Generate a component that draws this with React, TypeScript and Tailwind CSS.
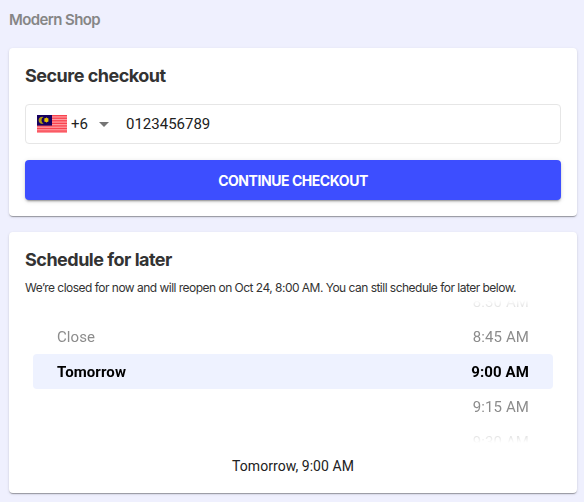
import React from "react";

const slots = [
    { day: "", time: "8:30 AM" },
    { day: "Close", time: "8:45 AM" },
    { day: "Tomorrow", time: "9:00 AM", selected: true },
    { day: "", time: "9:15 AM" },
    { day: "", time: "9:30 AM" },
];

const cardClass =
    "rounded-[4px] bg-white px-4 shadow-[0_2px_1px_-1px_rgba(0,0,0,0.2),0_1px_1px_0_rgba(0,0,0,0.14),0_1px_3px_0_rgba(0,0,0,0.12)]";

function MalaysiaFlag() {
    return (
        <svg width="30" height="18" viewBox="0 0 30 18" aria-hidden="true">
            <rect width="30" height="18" fill="#ff9ba1" />
            {[0, 1, 2, 3, 4, 5, 6].map((i) => (
                <rect key={i} y={i * 2.571} width="30" height="1.3" fill="#f8434e" />
            ))}
            <rect width="15" height="10.6" fill="#16005f" />
            <path d="M6.6 2.1A3.5 3.5 0 1 0 6.6 8.4A3.4 3.4 0 0 1 6.6 2.1Z" fill="#b39a10" />
            <circle cx="9.4" cy="5" r="1.9" fill="#e8c400" />
            <path
                d="M9.4 2.1l.6 1.5 1.5-.7-.6 1.5 1.5.6-1.5.6.6 1.5-1.5-.7-.6 1.5-.6-1.5-1.5.7.6-1.5-1.5-.6 1.5-.6-.6-1.5 1.5.7z"
                fill="#e8c400"
            />
        </svg>
    );
}

function App() {
    return (
        <div className="h-[502px] w-[584px] overflow-hidden bg-[#eff0fe] pr-[7px] pl-[9px] font-['Inter',sans-serif] text-[#333]">
            <header className="flex h-12 items-start pt-[9px]">
                <span className="text-[15px] leading-[22px] font-semibold tracking-[-0.6px] text-[#868686]">
                    Modern Shop
                </span>
            </header>

            {/* Checkout */}
            <section className={`${cardClass} h-[168px] pt-4`}>
                <h2 className="text-[18px] leading-6 font-bold tracking-[-0.5px]">
                    Secure checkout
                </h2>
                <div className="mt-4 flex h-10 items-center rounded-[4px] border border-[#e6e6e6] pl-[11px] font-['Roboto',sans-serif] text-[15px] text-[#212121]">
                    <MalaysiaFlag />
                    <span className="ml-1 w-[17px]">+6</span>
                    <svg className="ml-[11px]" width="10" height="5" viewBox="0 0 10 5" aria-hidden="true">
                        <path d="M0 0h10L5 5z" fill="#757575" />
                    </svg>
                    <span className="ml-[17px]">0123456789</span>
                </div>
                <button className="mt-4 flex h-10 w-full items-center justify-center rounded-[4px] bg-[#3d4eff] pt-0.5 text-sm font-bold tracking-[-0.45px] text-white shadow-[0_3px_1px_-2px_rgba(0,0,0,0.2),0_2px_2px_0_rgba(0,0,0,0.14),0_1px_5px_0_rgba(0,0,0,0.12)]">
                    CONTINUE CHECKOUT
                </button>
            </section>

            {/* Schedule */}
            <section className={`${cardClass} mt-4 h-[261px] pt-4`}>
                <h2 className="text-[18px] leading-6 font-bold tracking-[-0.5px]">
                    Schedule for later
                </h2>
                <p className="mt-2 text-xs leading-4 tracking-[-0.52px] whitespace-nowrap">
                    We’re closed for now and will reopen on Oct 24, 8:00 AM. You can still schedule for later below.
                </p>
                <div className="mx-2 mt-[4px] flex h-[143px] flex-col overflow-hidden font-['Roboto',sans-serif] text-[15px] tracking-[0.1px] [mask-image:linear-gradient(to_bottom,transparent,#000_20%,#000_80%,transparent)]">
                    {slots.map((slot) => (
                        <div
                            key={slot.time}
                            className={`flex h-[35px] shrink-0 items-center justify-between rounded-[4px] px-6 pt-0.5 first:-mt-4 ${
                                slot.selected ? "bg-[#eef2ff] font-bold text-black" : "text-[#8c8c8c]"
                            }`}
                        >
                            <span>{slot.day}</span>
                            <span>{slot.time}</span>
                        </div>
                    ))}
                </div>
                <p className="mt-[13px] text-center font-['Roboto',sans-serif] text-sm leading-5 tracking-[0.05px] text-[#212121]">
                    Tomorrow, 9:00 AM
                </p>
            </section>
        </div>
    );
}

export default App;
